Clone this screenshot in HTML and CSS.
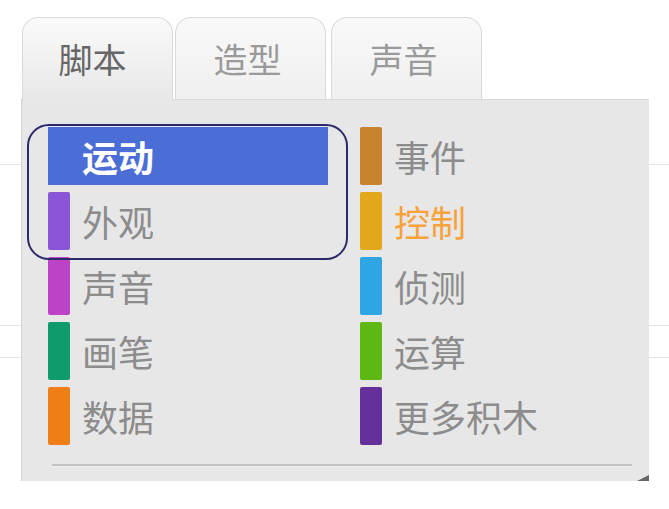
FILE: index.html
```html
<!DOCTYPE html>
<html lang="zh-CN">
<head>
    <meta charset="UTF-8">
    <meta name="viewport" content="width=device-width, initial-scale=1.0">
    <title>积木分类</title>
    <link rel="stylesheet" href="styles.css">
</head>
<body>
    <div class="editor">
        <div class="tabs">
            <div class="tab active">脚本</div>
            <div class="tab">造型</div>
            <div class="tab last">声音</div>
        </div>
        <div class="palette">
            <div class="categories">
                <div class="category motion selected"><span class="label">运动</span></div>
                <div class="category events"><span class="bar"></span><span class="label">事件</span></div>
                <div class="category looks"><span class="bar"></span><span class="label">外观</span></div>
                <div class="category control"><span class="bar"></span><span class="label">控制</span></div>
                <div class="category sound"><span class="bar"></span><span class="label">声音</span></div>
                <div class="category sensing"><span class="bar"></span><span class="label">侦测</span></div>
                <div class="category pen"><span class="bar"></span><span class="label">画笔</span></div>
                <div class="category operators"><span class="bar"></span><span class="label">运算</span></div>
                <div class="category data"><span class="bar"></span><span class="label">数据</span></div>
                <div class="category more"><span class="bar"></span><span class="label">更多积木</span></div>
            </div>
            <div class="divider"></div>
            <div class="highlight"></div>
            <div class="corner"></div>
        </div>
    </div>
</body>
</html>
```

FILE: styles.css
```css
body {
    margin: 0;
    background-color: white;
    background-image:
        linear-gradient(#e4e4e4, #e4e4e4),
        linear-gradient(#e4e4e4, #e4e4e4),
        linear-gradient(#e4e4e4, #e4e4e4);
    background-size: 100% 1px;
    background-position: 0 164px, 0 325px, 0 357px;
    background-repeat: no-repeat;
    font-family: "Noto Sans CJK SC", "Noto Sans", sans-serif;
    height: 509px;
    overflow: hidden;
}

.editor {
    width: 628px;
    margin-left: 21px;
    padding-top: 17px;
}

.tabs {
    display: flex;
    padding-left: 1px;
    height: 82px;
}

.tab {
    width: 151px;
    box-sizing: border-box;
    margin-right: 2px;
    border: 1px solid #d9d9d9;
    border-bottom: none;
    border-radius: 16px 16px 0 0;
    background: linear-gradient(#f9f9f9, #efefef);
    color: #9a9a9a;
    font-size: 34px;
    line-height: 1;
    padding: 24px 6px 0 0;
    text-align: center;
    height: 83px;
}

.tab.last {
    margin-left: 3px;
}

.tab.active {
    color: #666;
    background: linear-gradient(#fafafa, #e7e7e8);
    position: relative;
    z-index: 1;
    height: 84px;
    padding-right: 10px;
}

.palette {
    position: relative;
    height: 382px;
    box-sizing: border-box;
    background-color: #e7e7e8;
    border-top: 1px solid #dadada;
    border-left: 1px solid #d4d4d4;
    padding: 27px 0 0 26px;
}

.categories {
    display: grid;
    grid-template-columns: 312px 270px;
    row-gap: 7px;
}

.category {
    display: flex;
    align-items: center;
    height: 58px;
    width: 280px;
}

.bar {
    width: 22px;
    height: 100%;
    border-radius: 2px;
    margin-right: 12px;
}

.label {
    font-size: 36px;
    line-height: 1;
    color: #8c8c8c;
}

.selected {
    background-color: #4b6dd6;
}

.selected .label {
    color: white;
    font-weight: bold;
    margin-left: 34px;
}

.events .bar { background-color: #c8832f; }
.looks .bar { background-color: #8a55d7; }
.control .bar { background-color: #e2a71a; }
.control .label { color: #f7a23a; }
.sound .bar { background-color: #bc43c6; }
.sensing .bar { background-color: #2ea6e3; }
.pen .bar { background-color: #109b6c; }
.operators .bar { background-color: #5db814; }
.data .bar { background-color: #ef7e17; }
.more .bar { background-color: #64309b; }

.divider {
    margin: 19px 0 0 4px;
    width: 580px;
    height: 2px;
    background-color: #c2c2c2;
    border-bottom: 1px solid #f2f2f2;
}

.highlight {
    position: absolute;
    left: 5px;
    top: 24px;
    width: 317px;
    height: 132px;
    border: 2px solid #2b2a6b;
    border-radius: 22px;
}

.corner {
    position: absolute;
    right: 0;
    bottom: 0;
    width: 0;
    height: 0;
    border-left: 12px solid transparent;
    border-bottom: 6px solid #666;
}
```
